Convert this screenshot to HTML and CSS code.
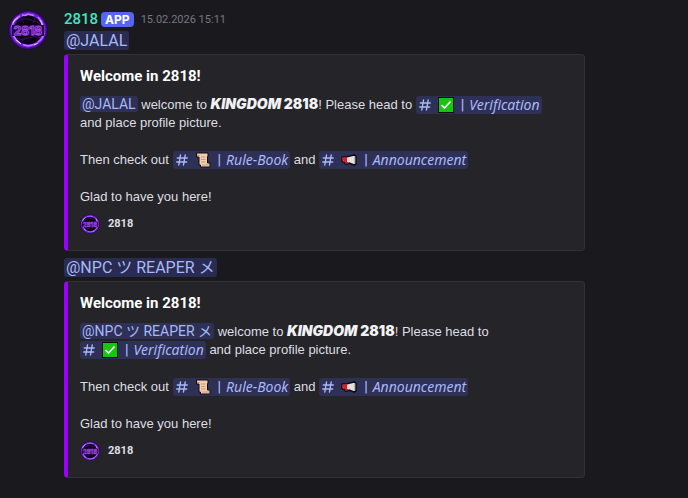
FILE: index.html
```
<!DOCTYPE html>
<html lang="en">
<head>
    <meta charset="UTF-8">
    <meta name="viewport" content="width=device-width, initial-scale=1.0">
    <title>2818 - Welcome</title>
    <link rel="stylesheet" href="styles.css">
</head>
<body>
    <!-- Shared icons -->
    <svg class="sprites" aria-hidden="true">
        <defs>
            <radialGradient id="glow">
                <stop offset="0.7" stop-color="#0c0214"/>
                <stop offset="0.82" stop-color="#5d12b5"/>
                <stop offset="0.9" stop-color="#43108f"/>
                <stop offset="1" stop-color="#150627"/>
            </radialGradient>
        </defs>
        <symbol id="ring" viewBox="0 0 40 40">
            <circle cx="20" cy="20" r="20" fill="url(#glow)"/>
            <path d="M6 14Q14 8 20 9T34 15M7 28Q14 31 20 28T33 28M13 9l3 4M27 8l-2 5M14 31l4-3" fill="none" stroke="#35106a" stroke-width="1"/>
            <circle cx="20" cy="20" r="16" fill="none" stroke="#7420df" stroke-width="3"/>
            <path d="M4 17Q5 9 12 6M14 5l3 .5 3-1.5 6 1.5M30 7q4 4 5 9M36 23q-1 6-6 9M28 34l-4 1-4 1-5-1.500M12 33q-5-3-7-9" fill="none" stroke="#bd78ff" stroke-width="1.500"/>
            <path d="M5 13l2-3 3-2M32 10l2 4 1 4M8 30l3 2 2 2M26 35l4-2" fill="none" stroke="#e5c4ff" stroke-width="1"/>
            <rect x="4" y="15" width="32" height="11" fill="#280844"/>
        </symbol>
        <symbol id="hash" viewBox="0 0 12 12">
            <path d="M4.500 1L2.800 11M9.200 1L7.500 11M1.300 4H11.300M.700 8H10.700" fill="none" stroke="currentColor" stroke-width="1.400" stroke-linecap="round"/>
        </symbol>
        <symbol id="check" viewBox="0 0 16 16">
            <rect width="16" height="16" fill="#0b100d"/>
            <rect x="1" y="1" width="14" height="14" fill="#16c60c"/>
            <path d="M3.500 8l3 3 6-6.500" fill="none" stroke="#fff" stroke-width="1.600"/>
        </symbol>
        <symbol id="scroll" viewBox="0 0 16 16">
            <path d="M1.500 1H13v3.500h-.5V11H15v4H5.500v-2H4V5H1.500z" fill="#f3cdae" stroke="#0c0c0e" stroke-width="1" stroke-linejoin="round"/>
            <path d="M2 3.500h2.500M6 5h4.500M6 7.500h4.500M6 10h4.500M7 13h7" fill="none" stroke="#b98a70" stroke-width=".8"/>
        </symbol>
        <symbol id="horn" viewBox="0 0 16 16">
            <path d="M1 5h4l8-2 2 1v8l-2 1-5-2-1 1H4l-1-2H2L1 9z" fill="#e4e2de" stroke="#0c0c0e" stroke-width="1.400" stroke-linejoin="round"/>
            <path d="M1.500 5.500H6v4.500H2.500z" fill="#f01224"/>
            <path d="M4 10h3l-.5 1.500h-2z" fill="#b30e1d"/>
            <path d="M13.500 4v8" stroke="#b7b5b2"/>
        </symbol>
    </svg>

    <main class="message">
        <svg class="avatar" viewBox="0 0 40 40"><use href="#ring"/><text x="20" y="25" text-anchor="middle" class="logo-text">2818</text></svg>
        <div class="content">
            <header class="header">
                <span class="username">2818</span>
                <span class="app-tag">APP</span>
                <time class="timestamp" datetime="2026-02-15T15:11">15.02.2026 15:11</time>
            </header>

            <div class="ping"><a href="#" class="mention">@JALAL</a></div>
            <article class="embed">
                <h2 class="embed-title">Welcome in 2818!</h2>
                <p><a href="#" class="mention">@JALAL</a> welcome to <strong class="kingdom"><em>KINGDOM</em> 2818</strong>! Please head to <a href="#" class="mention channel"><svg class="hash"><use href="#hash"/></svg><svg class="emoji"><use href="#check"/></svg><b>|</b><i>Verification</i></a> and place profile picture.</p>
                <p>Then check out <a href="#" class="mention channel"><svg class="hash"><use href="#hash"/></svg><svg class="emoji"><use href="#scroll"/></svg><b>|</b><i>Rule-Book</i></a> and <a href="#" class="mention channel"><svg class="hash"><use href="#hash"/></svg><svg class="emoji"><use href="#horn"/></svg><b>|</b><i>Announcement</i></a></p>
                <p>Glad to have you here!</p>
                <footer class="embed-footer">
                    <svg class="footer-icon" viewBox="0 0 40 40"><use href="#ring"/><text x="20" y="25" text-anchor="middle" class="logo-text">2818</text></svg>
                    <span>2818</span>
                </footer>
            </article>

            <div class="ping"><a href="#" class="mention">@NPC ツ REAPER メ</a></div>
            <article class="embed">
                <h2 class="embed-title">Welcome in 2818!</h2>
                <p><a href="#" class="mention">@NPC ツ REAPER メ</a> welcome to <strong class="kingdom"><em>KINGDOM</em> 2818</strong>! Please head to <a href="#" class="mention channel"><svg class="hash"><use href="#hash"/></svg><svg class="emoji"><use href="#check"/></svg><b>|</b><i>Verification</i></a> and place profile picture.</p>
                <p>Then check out <a href="#" class="mention channel"><svg class="hash"><use href="#hash"/></svg><svg class="emoji"><use href="#scroll"/></svg><b>|</b><i>Rule-Book</i></a> and <a href="#" class="mention channel"><svg class="hash"><use href="#hash"/></svg><svg class="emoji"><use href="#horn"/></svg><b>|</b><i>Announcement</i></a></p>
                <p>Glad to have you here!</p>
                <footer class="embed-footer">
                    <svg class="footer-icon" viewBox="0 0 40 40"><use href="#ring"/><text x="20" y="25" text-anchor="middle" class="logo-text">2818</text></svg>
                    <span>2818</span>
                </footer>
            </article>
        </div>
    </main>
</body>
</html>
```

FILE: styles.css
```
* {
    box-sizing: border-box;
}

body {
    margin: 0;
    background-color: #1a1a1e;
    color: #dfdfe2;
    font-family: Roboto, "Noto Sans CJK JP", sans-serif;
    font-size: 14px;
    line-height: 18px;
}

.sprites {
    position: absolute;
    width: 0;
    height: 0;
}

.logo-text {
    fill: #2b0750;
    stroke: #a54cf0;
    stroke-width: 1px;
    font-family: Inter, sans-serif;
    font-size: 12px;
    font-weight: 700;
}

.message {
    display: flex;
    gap: 16px;
    padding: 8px;
}

.avatar {
    flex: none;
    width: 40px;
    height: 40px;
    margin-top: 2px;
    border-radius: 50%;
}

.content {
    flex: 1;
    min-width: 0;
}

/* Name row */
.header {
    display: flex;
    align-items: center;
    gap: 3px;
    height: 22px;
}

.username {
    color: #45e3c0;
    font-size: 15px;
    font-weight: 500;
}

.app-tag {
    padding: 0 4px;
    border-radius: 4px;
    background-color: #5865f2;
    color: #fff;
    font-family: Inter, sans-serif;
    font-size: 12px;
    font-weight: 700;
    line-height: 15px;
}

.timestamp {
    margin-left: 4px;
    padding-top: 2px;
    color: #77777f;
    font-size: 11px;
}

/* Mentions */
.ping {
    font-size: 16px;
    line-height: 22px;
}

.mention {
    padding: 0 2px;
    border-radius: 3px;
    background-color: #292b50;
    color: #a9b8f8;
    font-family: Roboto, "Noto Sans CJK JP", sans-serif;
    text-decoration: none;
}

.embed .mention {
    background-color: #2e3056;
    font-size: 14px;
    line-height: 14px;
}

.channel {
    display: inline-flex;
    align-items: center;
    height: 18px;
    vertical-align: top;
}

.channel b {
    margin: 0 5px 0 7px;
    font-weight: 700;
}

.channel i {
    font-family: "Noto Sans", sans-serif;
}

.hash {
    width: 12px;
    height: 12px;
    margin: 0 7px 0 1px;
}

.emoji {
    width: 16px;
    height: 16px;
}

/* Embeds */
.embed {
    max-width: 521px;
    margin: 2px 0 6px;
    padding: 12px 16px 16px 12px;
    border: 1px solid #313136;
    border-left: 4px solid #9900ff;
    border-radius: 4px;
    background-color: #242429;
}

.embed-title {
    margin: 0 0 11px;
    color: #fff;
    font-size: 15px;
    font-weight: 700;
    line-height: 18px;
}

.embed p {
    max-width: 480px;
    margin: 0 0 19px;
    font-family: "Liberation Sans", Arial, sans-serif;
    font-size: 13px;
}

.embed .kingdom {
    color: #f2f2f4;
    font-family: Inter, sans-serif;
    font-size: 14px;
    font-weight: 900;
    line-height: 14px;
}

.embed-footer {
    display: flex;
    align-items: center;
    gap: 8px;
    margin-top: -11px;
    font-size: 11px;
    font-weight: 700;
}

.footer-icon {
    width: 20px;
    height: 20px;
    border-radius: 50%;
}
```
